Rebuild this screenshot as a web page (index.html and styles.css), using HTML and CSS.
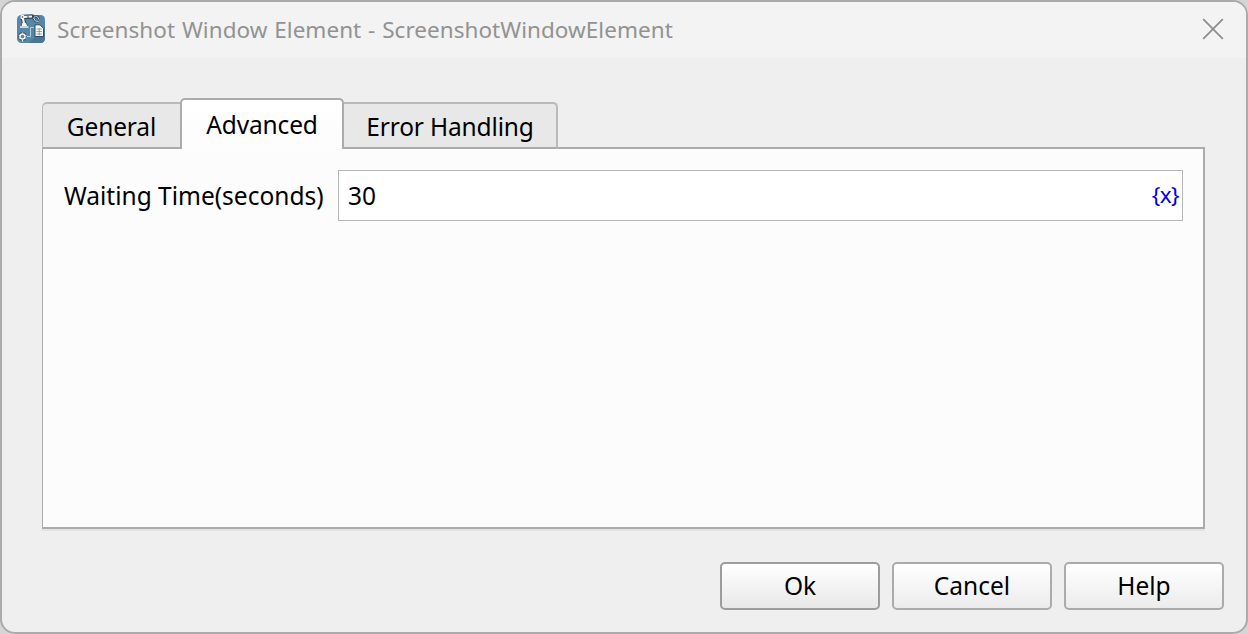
FILE: index.html
```html
<!DOCTYPE html>
<html lang="en">
<head>
<meta charset="utf-8">
<title>Screenshot Window Element</title>
<link rel="stylesheet" href="styles.css">
</head>
<body>
<div class="dialog">
  <header class="titlebar">
    <svg class="app-icon" width="28" height="30" viewBox="0 0 28 30">
      <rect x="0" y="1" width="28" height="28" rx="4.500" fill="#5487a9"/>
      <path d="M12 29 28 13V24.500a4.500 4.500 0 0 1-4.500 4.500Z" fill="#46779b"/>
      <path d="M5.500 3 15 2.500M5.500 3 7 9" fill="none" stroke="#33495c" stroke-width="4.400" stroke-linecap="round"/>
      <path d="M4 12.500 5 8.500h4l2 4Z" fill="#f5f5f2" stroke="#33495c" stroke-width=".8"/>
      <path d="M5.500 3 15 2.500M5.500 3 7 9" fill="none" stroke="#f5f5f2" stroke-width="2.200"/>
      <circle cx="5.500" cy="3" r="2.200" fill="#f5f5f2"/>
      <circle cx="5.500" cy="3" r=".8" fill="#33495c"/>
      <path d="M11 2v2" stroke="#33495c"/>
      <path d="M22 5.500c-.5-2-2-3.300-3.500-3.300L16.500 4l2 3 3 .3" fill="none" stroke="#33495c" stroke-width="2.600"/>
      <path d="M22 5.500c-.5-2-2-3.300-3.500-3.300L16.500 4l2 3 3 .3" fill="none" stroke="#dce5ea" stroke-width="1"/>
      <path d="M3 13h8.500" stroke="#f5f5f2" stroke-width="1.600"/>
      <path d="M9.500 22.500h4v-9H17" fill="none" stroke="#b8cedd"/>
      <path d="M18 10.800h5l3.500 3.500v8.200H18Z" fill="#f8f8f5" stroke="#33495c"/>
      <path d="M19.500 15h5.500M19.500 17.500h5.500M19.500 20h5.500M22.200 14v7.500" stroke="#70818f" stroke-width=".7"/>
      <circle cx="5.500" cy="22.500" r="3" fill="#5487a9" stroke="#33495c" stroke-width="2.600"/>
      <circle cx="5.500" cy="22.500" r="2.500" fill="none" stroke="#f5f5f2" stroke-width="1.500"/>
      <path d="M5.500 18.500v1M5.500 25.500v2M1.800 21.500h1M8.500 21.500h1M1.800 24h1M8.500 24h1" stroke="#f5f5f2" stroke-width="1.200"/>
    </svg>
    <h1 class="title">Screenshot Window Element - ScreenshotWindowElement</h1>
    <svg class="close" width="22" height="22" viewBox="0 0 22 22"><path d="M1.200 1.200 20.800 20.800M20.800 1.200 1.200 20.800"/></svg>
  </header>
  <main class="content">
    <nav class="tabs">
      <div class="tab tab-general"><span>General</span></div>
      <div class="tab active"><span>Advanced</span></div>
      <div class="tab tab-error"><span>Error Handling</span></div>
    </nav>
    <section class="panel">
      <label class="label">Waiting Time(seconds)</label>
      <div class="field"><span class="value">30</span><span class="variable">{x}</span></div>
    </section>
  </main>
  <footer class="actions">
    <button class="button primary">Ok</button>
    <button class="button">Cancel</button>
    <button class="button">Help</button>
  </footer>
</div>
</body>
</html>
```
FILE: styles.css
```css
* { box-sizing: border-box; }
body {
  margin: 0;
  background: #d5d5d5;
  font-family: "Noto Sans", "Open Sans", sans-serif;
  font-size: 24.500px;
  color: #000;
  overflow: hidden;
}
.dialog {
  width: 1248px;
  height: 634px;
  border: 2px solid #ababab;
  border-radius: 15px;
  background: #efefef;
  display: flex;
  flex-direction: column;
  overflow: hidden;
}
.titlebar {
  height: 56px;
  flex: none;
  display: flex;
  align-items: flex-start;
  padding: 12px 22px 0 15px;
  background: #f3f3f3;
}
.app-icon { flex: none; }
.title {
  margin: 0 0 0 12px;
  font-size: 22.500px;
  line-height: 32px;
  font-weight: 400;
  letter-spacing: 0.040px;
  word-spacing: 0.900px;
  color: #929292;
  white-space: nowrap;
}
.close { margin: 4px 0 0 auto; fill: none; stroke: #8e8e8e; stroke-width: 1.800; }
.content { padding: 40px 41px 0 40px; }
.tabs {
  height: 51px;
  display: flex;
  align-items: flex-end;
  position: relative;
  z-index: 1;
}
.tab {
  height: 47px;
  border: 2px solid #bababa;
  border-bottom-color: #ababab;
  border-radius: 5px 5px 0 0;
  background: #e8e8e8;
  line-height: 46px;
  letter-spacing: -0.150px;
  display: flex;
  justify-content: center;
  white-space: nowrap;
}
.tab-general { width: 138px; border-right: 0; border-left-width: 1px; border-top-right-radius: 0; }
.active {
  width: 164px;
  height: 51px;
  border-color: #ababab;
  border-bottom: 0;
  background: linear-gradient(#fff, #fcfcfc);
}
.active span { line-height: 50px; }
.tab-error { width: 214px; border-left: 0; border-top-left-radius: 0; }
.panel {
  height: 382px;
  margin-top: -2px;
  border: 2px solid #ababab;
  border-left-width: 1px;
  background: #fcfcfc;
  box-shadow: 0 2px 0 #e3e3e3;
  display: flex;
  align-items: flex-start;
  padding: 21px 20px 0 21px;
}
.label { width: 274px; flex: none; line-height: 51px; white-space: nowrap; }
.field {
  flex: 1;
  height: 51px;
  border: 1px solid #b6b6b6;
  background: #fff;
  line-height: 49px;
  padding: 0 3px 0 9px;
  display: flex;
  justify-content: space-between;
}
.variable { color: #0000f0; font-size: 22.500px; letter-spacing: -0.600px; line-height: 48px; }
.actions {
  margin-top: 33px;
  padding-right: 22px;
  display: flex;
  justify-content: flex-end;
  gap: 12px;
}
.button {
  width: 160px;
  height: 48px;
  padding: 0;
  border: 2px solid #ababab;
  border-radius: 5px;
  background: linear-gradient(#fff, #ececec);
  font: inherit;
  line-height: 44px;
  color: #000;
}
.primary { border-color: #9c9c9c; background: linear-gradient(#fff, #e8e8e8); }
```
